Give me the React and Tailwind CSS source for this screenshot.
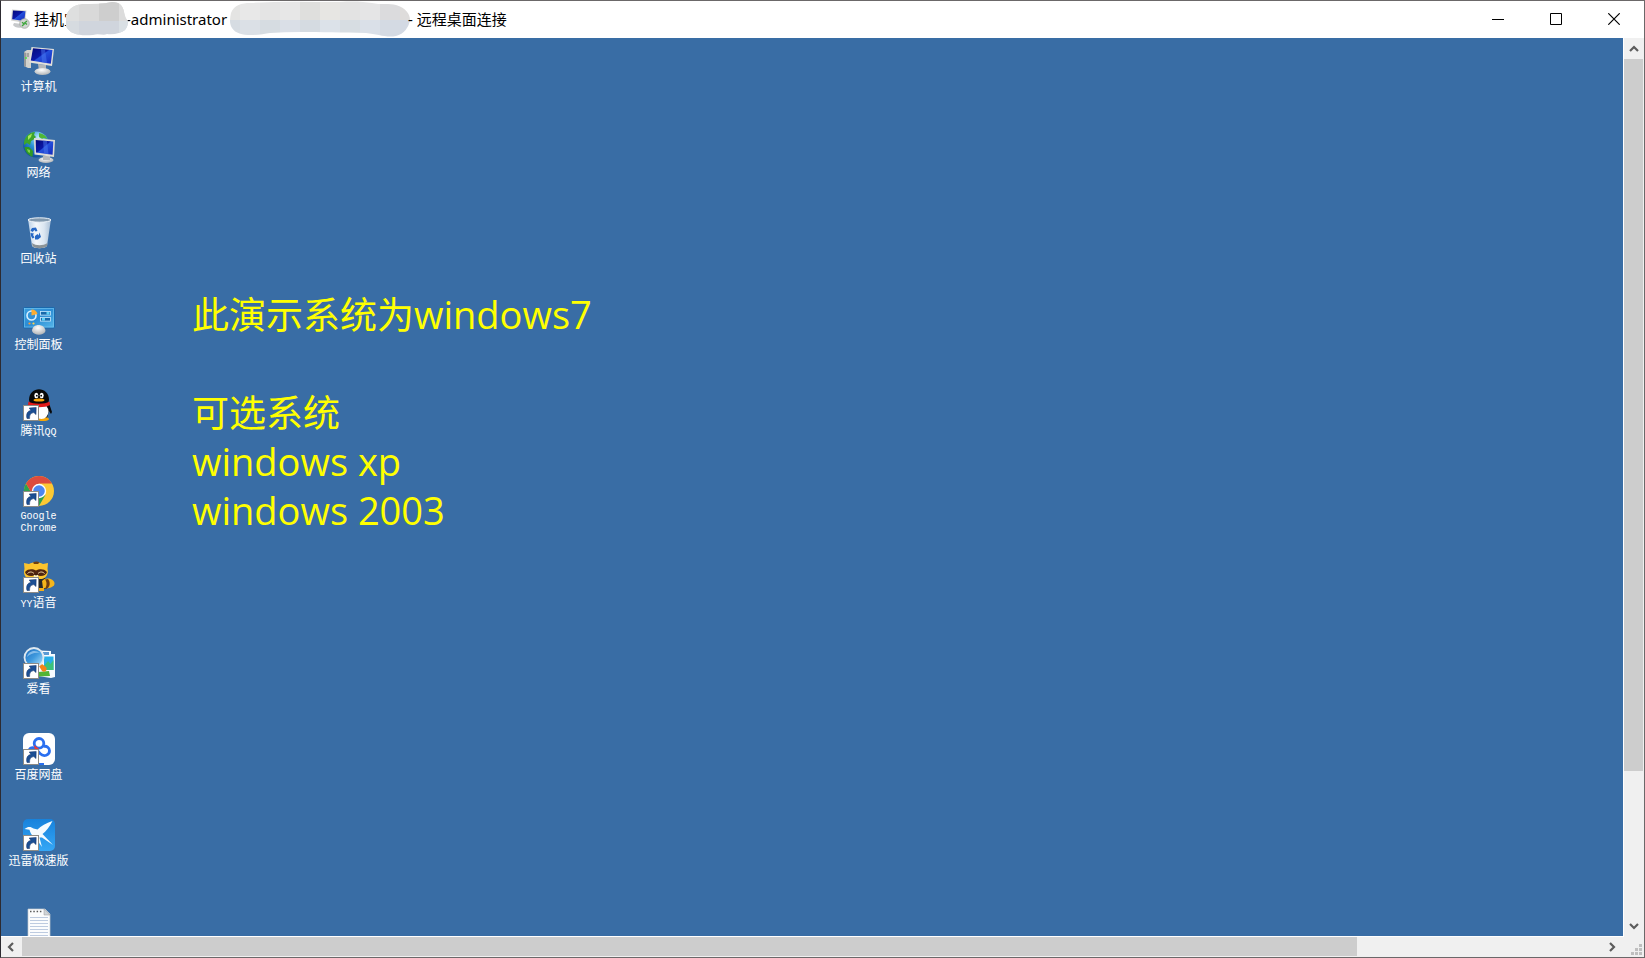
import React from "react";

const CJK = "font-['Open_Sans','Noto_Sans_CJK_SC',sans-serif]";

function Icon({ children, shortcut }) {
  return (
    <svg viewBox="0 0 32 32" className="block h-8 w-8 shrink-0" aria-hidden="true">
      {children}
      {shortcut && (
        <g>
          <rect x="0.5" y="16.5" width="15" height="15" fill="#fff" stroke="#8d8b86" />
          <path
            d="M4 29.5C2.8 25 4.5 21.8 8 21.4L6.2 19L13.2 18.4L13 25.6L10.8 23.6C8 24 6.2 25.8 6.6 29.5Z"
            fill="#1c4f93"
            stroke="#0d2f66"
            strokeWidth="0.5"
          />
        </g>
      )}
    </svg>
  );
}

function Gradients() {
  return (
    <svg className="absolute h-0 w-0" aria-hidden="true">
      <defs>
        <linearGradient id="screen" x1="0" y1="0" x2="1" y2="1">
          <stop offset="0" stopColor="#050a78" />
          <stop offset="0.45" stopColor="#0a18a8" />
          <stop offset="0.5" stopColor="#2450dc" />
          <stop offset="1" stopColor="#1428bc" />
        </linearGradient>
        <radialGradient id="base" cx="0.45" cy="0.3" r="0.8">
          <stop offset="0" stopColor="#fff" />
          <stop offset="1" stopColor="#a5a9ac" />
        </radialGradient>
        <radialGradient id="globe" cx="0.6" cy="0.25" r="0.75">
          <stop offset="0" stopColor="#c4f1ff" />
          <stop offset="0.5" stopColor="#2a95d8" />
          <stop offset="1" stopColor="#114a9c" />
        </radialGradient>
        <linearGradient id="bin" x1="0" y1="0" x2="1" y2="0">
          <stop offset="0" stopColor="#b9d0e8" />
          <stop offset="0.35" stopColor="#f4f8fc" />
          <stop offset="0.7" stopColor="#dbe6f1" />
          <stop offset="1" stopColor="#a9bfd6" />
        </linearGradient>
        <linearGradient id="panel" x1="0" y1="0" x2="1" y2="1">
          <stop offset="0" stopColor="#3b9fe0" />
          <stop offset="0.5" stopColor="#2b8cd4" />
          <stop offset="1" stopColor="#58b8ea" />
        </linearGradient>
        <linearGradient id="sky" x1="0" y1="0" x2="0" y2="1">
          <stop offset="0" stopColor="#1782dc" />
          <stop offset="1" stopColor="#35a7f6" />
        </linearGradient>
        <linearGradient id="lens" x1="0" y1="0" x2="1" y2="1">
          <stop offset="0" stopColor="#1d68ba" />
          <stop offset="0.5" stopColor="#3f9ade" />
          <stop offset="1" stopColor="#bdeaff" />
        </linearGradient>
      </defs>
    </svg>
  );
}

const ComputerIcon = () => (
  <Icon>
    <path d="M1 7L4 5L8 5V23L5 23L1 21Z" fill="#d2d2cd" />
    <path d="M1 7L3 8V22L1 21Z" fill="#97999a" />
    <path d="M3.5 9H6M3.5 11H6" stroke="#777" />
    <circle cx="3" cy="13" r="1" fill="#4ee044" />
    <path d="M15 19L23 20L23 26H16Z" fill="#b5b8ba" />
    <ellipse cx="19.5" cy="26.5" rx="8" ry="3.5" fill="url(#base)" />
    <path d="M8.5 2L31 4L29 21L6 17.5Z" fill="#e1e0da" />
    <path d="M10 3.2L29.5 5L27.8 18.8L7.8 15.5Z" fill="url(#screen)" />
    <path d="M18 4L22 4.4L24 18L19 17.3Z" fill="#4b7af0" opacity="0.5" />
  </Icon>
);

const NetworkIcon = () => (
  <Icon>
    <circle cx="13" cy="13.5" r="13" fill="url(#globe)" />
    <path d="M3 6C6 2 9 1 12 1L11 4L13 6L10 9L8 10L7 14L4 12L1 14C0.5 11 1.5 8 3 6Z" fill="#3da52c" />
    <path d="M16 2C20 2.5 23 5 24.5 8L21 7L19 8L16 6Z" fill="#4fb835" />
    <path d="M1.5 16L6 16L10 20L9.5 26C5 24 2 21 1.5 16Z" fill="#2f9a24" />
    <path d="M5 5L9 2.5L8 6L5 9Z" fill="#a6e85a" />
    <path d="M4 18L7 19L7 22L5 21Z" fill="#7fd04a" />
    <ellipse cx="23" cy="29" rx="7.5" ry="3" fill="url(#base)" />
    <path d="M20 25H27V29H20Z" fill="#b5b8ba" />
    <path d="M11 7L32 9L31 26L11.5 23.5Z" fill="#dedcd6" />
    <path d="M12.7 9L30.3 10.5L29.6 23.8L13 21.6Z" fill="url(#screen)" />
    <path d="M20 9.6L24 10L25.5 23.2L21 22.6Z" fill="#4b7af0" opacity="0.5" />
  </Icon>
);

const RecycleIcon = () => (
  <Icon>
    <path d="M5 2L9 29C11 32 22 32 24 29L28 2Z" fill="url(#bin)" />
    <path d="M9 26L9.5 29C12 32 21 32 24 29L24.5 26C20 29 13 29 9 26Z" fill="#8b9397" />
    <ellipse cx="16.5" cy="3" rx="11.5" ry="2.2" fill="#8299ae" stroke="#eef4fa" strokeWidth="1" />
    <g fill="#2668c6">
      <path d="M9 11L13 10.5L14.5 14L12.5 14.5L11.5 13L9.5 15L7.5 13.5Z" />
      <path d="M7.5 16L11 16.5L10 18L11.5 20.5L9.5 21.5L8 19Z" />
      <path d="M12 19L14.5 17L15.5 18.5L16.5 15.5L18 20L15 22.5H12Z" />
    </g>
  </Icon>
);

const ControlIcon = () => (
  <Icon>
    <rect x="0.5" y="4.5" width="31" height="20.5" rx="1" fill="url(#panel)" stroke="#1a69ac" />
    <rect x="1.5" y="5.5" width="29" height="18.5" fill="none" stroke="#79c7f1" strokeWidth="0.6" />
    <circle cx="8.5" cy="12.5" r="4.5" fill="none" stroke="#d9f0ff" strokeWidth="1.6" />
    <path d="M8.5 12.5V6.5A6 6 0 0 1 14.5 11Z" fill="#fbac31" />
    <rect x="17.5" y="8.5" width="10" height="3.6" fill="#1668aa" stroke="#c8ebff" strokeWidth="0.8" />
    <rect x="23.5" y="9" width="3" height="2.6" fill="#5fd2f7" />
    <rect x="17.5" y="14.5" width="10" height="3.6" fill="#1668aa" stroke="#c8ebff" strokeWidth="0.8" />
    <rect x="19" y="15" width="3" height="2.6" fill="#5fd2f7" />
    <circle cx="6.5" cy="20.5" r="1.1" fill="#ff9831" />
    <circle cx="10.5" cy="20.5" r="1.1" fill="#ffd24b" />
    <path d="M9 28C9 20 22 20 22.5 28C21 33 11 33 9 28Z" fill="url(#base)" />
  </Icon>
);

const QQIcon = () => (
  <Icon shortcut>
    <path d="M7 14L26 14L29 23L28 25L26 22L24 29H11Z" fill="#080808" />
    <ellipse cx="20" cy="30" rx="6" ry="2" fill="#f5a60a" />
    <ellipse cx="18.5" cy="22.5" rx="7" ry="7.5" fill="#fff" />
    <path d="M6 11C6 -3.5 26 -3.5 26 11L25 15H7Z" fill="#080808" />
    <ellipse cx="13.3" cy="6.5" rx="2" ry="2.7" fill="#fff" />
    <ellipse cx="18.7" cy="6.5" rx="2" ry="2.7" fill="#fff" />
    <circle cx="13.8" cy="6.7" r="0.9" />
    <circle cx="18.2" cy="6.7" r="0.9" />
    <ellipse cx="16" cy="11" rx="5.5" ry="1.6" fill="#f9a40b" />
    <path d="M5.5 12.5C10 15.5 22 15.5 26.5 12.5L27 16C22 19 10 19 5 16Z" fill="#e31b18" />
    <path d="M9 17L13 18V22H9Z" fill="#c80f10" />
  </Icon>
);

const ChromeIcon = () => (
  <Icon shortcut>
    <circle cx="16" cy="16" r="15" fill="#fcc934" />
    <path d="M3 8.5A15 15 0 0 0 16 31L22.5 19.7L9.5 19.7Z" fill="#2da14e" />
    <path d="M3 8.5A15 15 0 0 1 29 8.5H16L9.5 19.7Z" fill="#dd4b3e" />
    <circle cx="16" cy="16" r="7.2" fill="#fff" />
    <circle cx="16" cy="16" r="5.8" fill="#4c86ef" />
  </Icon>
);

const YYIcon = () => (
  <Icon shortcut>
    <path d="M15 17H22L24 28H15Z" fill="#26282b" />
    <path d="M19 20C23 15 31 18 31.5 22C32 26 26 28 20 27Z" fill="#f5b51b" />
    <path d="M22 18.5C24 20.5 24 25 22 27.5L25 27C27.5 24 27 20.5 25 18Z" fill="#6f3d13" />
    <path d="M16 27H21V30H16Z" fill="#f2ae1b" />
    <path d="M1 2L6 3C10 0.5 16 0.5 20 3L25 2L24.5 8C26 13 23 17 19 18H7C2 17 0 13 1.5 8Z" fill="#fbc42d" />
    <path d="M10 1.5C12 0 15 0 16.5 1.5L15 3H11Z" fill="#70400f" />
    <path d="M2 11C5 7.5 10 8 13 9.5C16 8 21 7.5 24 11C23 15 18 16 13 14C8 16 3 15 2 11Z" fill="#4f2410" />
    <path d="M4.5 12.5C6.5 10.5 9 10.5 11 12.5M15 12.5C17 10.5 19.5 10.5 21.5 12.5" fill="none" stroke="#f3d9a6" strokeWidth="1" />
    <ellipse cx="13" cy="15" rx="2.5" ry="1.3" fill="#fff0b8" />
    <circle cx="13" cy="13.6" r="0.9" fill="#321608" />
  </Icon>
);

const ViewerIcon = () => (
  <Icon shortcut>
    <path d="M16 3.5L28 4V7H32V30L28 31L15 29Z" fill="#f7fbff" />
    <path d="M20 5H26V8H20Z" fill="#5b9ad4" />
    <path d="M21 9.5H30.5V23H21Z" fill="#28aee8" />
    <path d="M21 19L25 14L27.5 17L30.5 13V23H21Z" fill="#3bc27a" />
    <path d="M15 25L26 24L27 29L15 29.5Z" fill="#53b435" />
    <path d="M16 19L19 17L23 20C25 23 22 26 19 24Z" fill="#f58317" />
    <circle cx="11" cy="10.5" r="9.5" fill="url(#lens)" stroke="#dfe8ef" strokeWidth="1.8" />
    <path d="M4 10C5 4 12 2 17 6C12 5 7 7 4 10Z" fill="#b9defa" opacity="0.6" />
  </Icon>
);

const BaiduIcon = () => (
  <Icon shortcut>
    <rect width="32" height="32" rx="6" fill="#fff" />
    <path d="M6 18C6.5 14.5 10 13.5 13 16L17 20.5C21 24.5 26.5 22 26.5 17.8C26.5 14.5 23.5 12.5 20.5 13.5" fill="none" stroke="#2a6ff0" strokeWidth="2.8" />
    <circle cx="16" cy="10.3" r="4.8" fill="none" stroke="#2a6ff0" strokeWidth="2.8" />
    <path d="M11 12L16 15.8L12 17.4Z" fill="#ed3836" />
    <rect x="16" y="30" width="5" height="2" fill="#2a6ff0" />
  </Icon>
);

const ThunderIcon = () => (
  <Icon shortcut>
    <rect width="32" height="32" rx="5" fill="url(#sky)" />
    <path d="M1.5 10C5 7 8 7.5 10.5 9.5L14.5 10.5C18 7 23 4 29.5 2C26.5 8 23 12.5 19.5 15L30 26L19 18.5L16.5 18.5L19 28L13 19.5C9 17.5 7.5 14 6.5 10.8Z" fill="#f5fbff" />
  </Icon>
);

const TextIcon = () => (
  <Icon>
    <path d="M5 4H22L27 9V32H5Z" fill="#fbfcfd" stroke="#c2c8ce" strokeWidth="0.7" />
    <path d="M21 4L27 10H21Z" fill="#cfd4d8" stroke="#999" strokeWidth="0.5" />
    <path d="M7 6.5H20" stroke="#5a5a5a" strokeWidth="1.6" strokeDasharray="1.5 1.8" />
    <path d="M7 12.5H25M7 15.5H25M7 18.5H25M7 21.5H25M7 24.5H25M7 27.5H25M7 30.5H25" stroke="#bdcbe0" strokeWidth="1" />
  </Icon>
);

const items = [
  { icon: ComputerIcon, label: "计算机" },
  { icon: NetworkIcon, label: "网络" },
  { icon: RecycleIcon, label: "回收站" },
  { icon: ControlIcon, label: "控制面板" },
  { icon: QQIcon, label: "腾讯", latinAfter: "QQ" },
  { icon: ChromeIcon, latin: "Google Chrome" },
  { icon: YYIcon, latin: "YY", label: "语音" },
  { icon: ViewerIcon, label: "爱看" },
  { icon: BaiduIcon, label: "百度网盘" },
  { icon: ThunderIcon, label: "迅雷极速版" },
  { icon: TextIcon, name: "文本文档" },
];

function DesktopItem({ icon: Glyph, label, latin, latinAfter, name }) {
  const mono = "font-['Liberation_Mono',monospace] text-[10px]";
  return (
    <button type="button" aria-label={name} className="flex h-[86px] w-full shrink-0 flex-col items-center gap-1 text-white">
      <Glyph />
      {label ? (
        <span className="w-16 text-center text-[12px] leading-[12px]">
          {latin && <span className={mono}>{latin}</span>}
          {label}
          {latinAfter && <span className={mono}>{latinAfter}</span>}
        </span>
      ) : (
        latin && <span className={"w-16 text-center leading-[12px] " + mono}>{latin}</span>
      )}
    </button>
  );
}

function RemoteIcon() {
  return (
    <svg viewBox="0 0 20 20" className="h-5 w-5 shrink-0" aria-hidden="true">
      <path d="M4 14L12 15V18C9 20 4 18 3 16Z" fill="#c7c9cb" />
      <path d="M2 0.5L16.5 1.5L15 14L1 11.5Z" fill="#d5d5d2" />
      <path d="M3 1.5L15.5 2.3L14.2 12L2.2 10.2Z" fill="url(#screen)" />
      <circle cx="14.5" cy="14.5" r="4.8" fill="#d2d5d2" stroke="#9ba09b" strokeWidth="0.7" />
      <path d="M12 13.2L14.2 15L12 17M17 12L14.8 13.8L17 15.6" fill="none" stroke="#3da63b" strokeWidth="1.3" />
    </svg>
  );
}

function SmudgeSmall() {
  return (
    <svg viewBox="0 0 63 34" className="relative -ml-[14px] h-[34px] w-[63px] shrink-0" aria-hidden="true">
      <clipPath id="smudge-a">
        <path d="M1 14C4 6 9 3 17 2C27 2 38 2 47 0C55 0 58 4 59 10C60 15 61 17 63 19C63 23 62 25 60 28C56 31 49 33 42 32C38 34 34 31 28 33C16 34 5 33 1 24Z" />
      </clipPath>
      <g clipPath="url(#smudge-a)">
        <rect width="63" height="19" fill="#d9d9d9" />
        <rect width="14" height="19" fill="#dedfdf" />
        <rect x="34" width="20" height="19" fill="#cecece" />
        <rect x="54" width="9" height="19" fill="#dcdcdc" />
        <rect y="19" width="63" height="15" fill="#d0d5dd" />
        <rect y="19" width="14" height="15" fill="#d6dbe0" />
        <rect x="54" y="19" width="9" height="15" fill="#d9dfe4" />
      </g>
    </svg>
  );
}

const topTiles = ["#e4e4e3", "#e8e8e8", "#e4e4e4", "#e7e7e7", "#dfdfdd", "#e7e6e3", "#e3e3e3", "#e5e5e6", "#dbdbdd", "#dedcdb"];
const bottomTiles = ["#d6dce2", "#dbe0e6", "#d6dce1", "#dadfe7", "#d5dbe1", "#dce2e9", "#d7dde2", "#dae0e8", "#d4dae3", "#d3d9e3"];

function SmudgeLarge() {
  return (
    <svg viewBox="0 0 180 36" className="h-9 w-[180px] shrink-0" aria-hidden="true">
      <clipPath id="smudge-b">
        <path d="M1 12C4 4 12 2 20 2C50 0 80 1 110 1C125 0 134 1 142 2C150 4 160 2 166 4C176 7 180 13 180 19C179 26 174 33 166 35C156 37 148 33 136 32C100 32 70 30 40 32C28 34 8 37 2 27C-1 22 0 17 1 12Z" />
      </clipPath>
      <g clipPath="url(#smudge-b)">
        {topTiles.map((c, i) => (
          <rect key={"t" + i} x={i * 20 - 10} width="20" height="19" fill={c} />
        ))}
        {bottomTiles.map((c, i) => (
          <rect key={"b" + i} x={i * 20 - 10} y="19" width="20" height="17" fill={c} />
        ))}
      </g>
    </svg>
  );
}

function CaptionButton({ label, children }) {
  return (
    <button type="button" aria-label={label} className="flex w-[58px] items-center justify-center">
      <svg viewBox="0 0 12 12" className="h-3 w-3" fill="none" stroke="#000" aria-hidden="true">
        {children}
      </svg>
    </button>
  );
}

function Arrow({ label, d, className }) {
  return (
    <button type="button" aria-label={label} className={"flex shrink-0 items-center justify-center " + className}>
      <svg viewBox="0 0 10 10" className="h-[10px] w-[10px]" fill="none" stroke="#5c5c5c" strokeWidth="2.2" aria-hidden="true">
        <path d={d} />
      </svg>
    </button>
  );
}

export default function App() {
  return (
    <div className={"flex h-screen flex-col overflow-hidden border border-[#6b6869] border-l-[#2d2b31] bg-[#f0f0f0] " + CJK}>
      <Gradients />
      <header className="flex h-[37px] shrink-0 justify-between bg-white pb-px pr-px text-[15px] leading-[20px] text-black">
        <h1 className="flex min-w-0 items-center whitespace-nowrap pl-[9px] font-['Noto_Sans','Noto_Sans_CJK_SC',sans-serif]">
          <RemoteIcon />
          <span className="ml-1 pb-px">挂机宝</span>
          <SmudgeSmall />
          <span className="-ml-[2px] w-[104px] pb-px">-administrator</span>
          <SmudgeLarge />
          <span className="-ml-[2px] pb-px">- 远程桌面连接</span>
        </h1>
        <div className="flex shrink-0">
          <CaptionButton label="最小化">
            <path d="M0 6.5H12" />
          </CaptionButton>
          <CaptionButton label="最大化">
            <path d="M0.5 0.5H11.5V11.5H0.5Z" />
          </CaptionButton>
          <CaptionButton label="关闭">
            <path d="M0.3 0.3L11.7 11.7M11.7 0.3L0.3 11.7" strokeWidth="1.2" />
          </CaptionButton>
        </div>
      </header>

      <div className="flex min-h-0 flex-1">
        <main className="flex min-w-0 flex-1 overflow-hidden border-b border-r border-white bg-[#396da5]">
          <nav aria-label="桌面" className="flex w-[75px] shrink-0 flex-col pt-[7px]">
            {items.map((item, i) => (
              <DesktopItem key={i} {...item} />
            ))}
          </nav>
          <div className="ml-[116px] pt-[252px] text-[38px] leading-[49px] text-[#ffff00]">
            <p>
              <span className="text-[37px]">此演示系统为</span>windows7
            </p>
            <p className="mt-[49px] text-[37px]">可选系统</p>
            <p>windows xp</p>
            <p>windows 2003</p>
          </div>
        </main>
        <div className="flex w-5 shrink-0 flex-col pr-px">
          <Arrow label="向上滚动" d="M1 7L5 3L9 7" className="h-[21px]" />
          <div className="grow-[712] bg-[#cdcdcd]" />
          <div className="grow-[145]" />
          <Arrow label="向下滚动" d="M1 2L5 6L9 2" className="h-[21px]" />
        </div>
      </div>

      <div className="flex h-5 shrink-0 pb-px">
        <Arrow label="向左滚动" d="M6 1L2 5L6 9" className="w-[21px]" />
        <div className="grow-[1335] bg-[#cdcdcd]" />
        <div className="grow-[244]" />
        <Arrow label="向右滚动" d="M3 1L7 5L3 9" className="w-[21px]" />
        <div className="flex w-[22px] shrink-0 items-end justify-end pb-px pr-[2px]">
          <svg viewBox="0 0 11 11" className="h-[11px] w-[11px]" fill="#bfbfbf" aria-hidden="true">
            <path d="M8 0h3v3h-3zM4 4h3v3h-3zM8 4h3v3h-3zM0 8h3v3h-3zM4 8h3v3h-3zM8 8h3v3h-3z" />
          </svg>
        </div>
      </div>
    </div>
  );
}
